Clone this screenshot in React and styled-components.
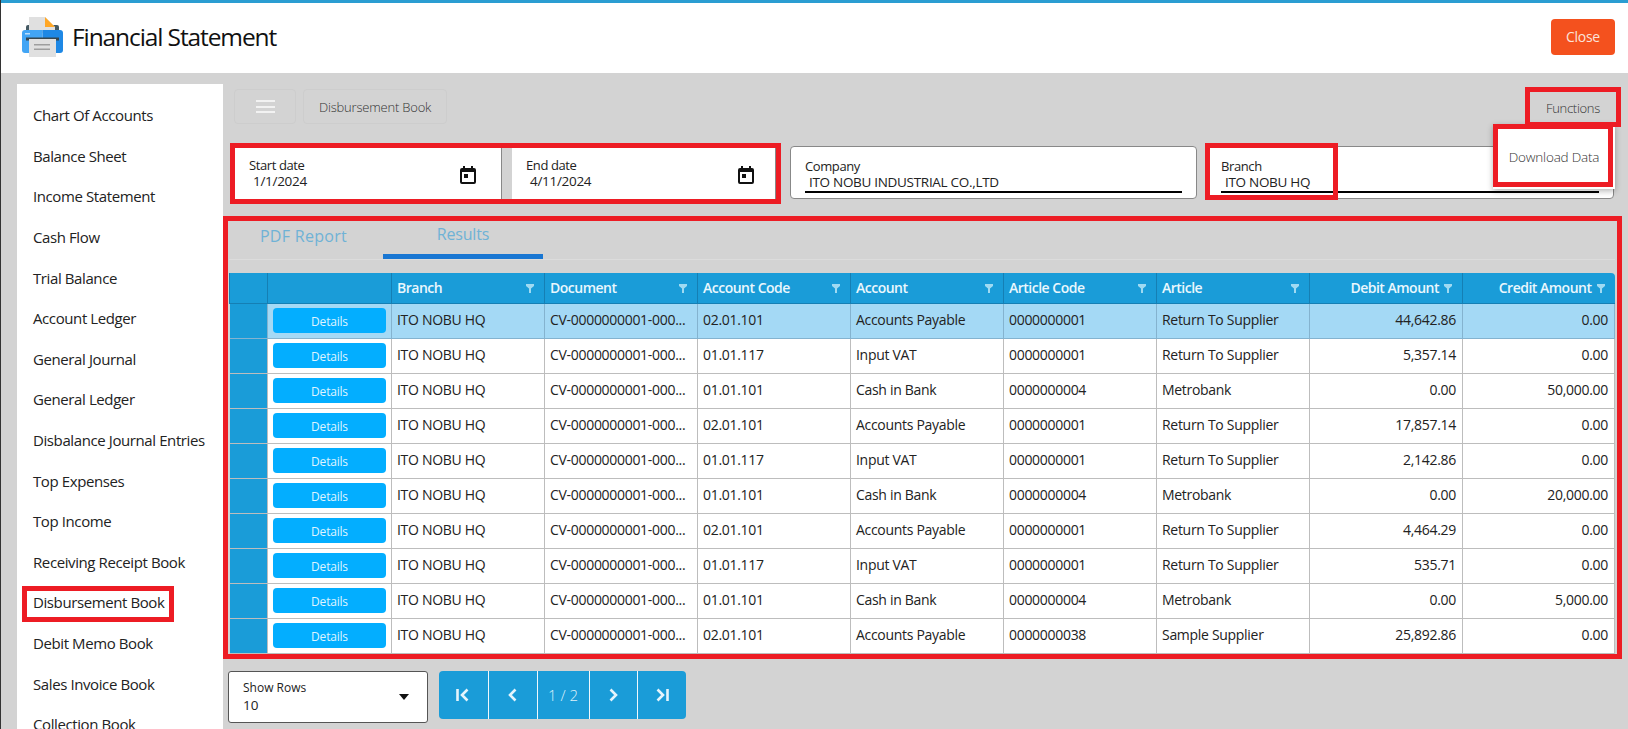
import React from 'react';
import styled, { createGlobalStyle } from 'styled-components';

const GlobalStyle = createGlobalStyle`
  html, body, #root {
    margin: 0;
    height: 100%;
  }

  body {
    overflow: hidden;
    font-family: "Open Sans", "Noto Sans", sans-serif;
    color: #222;
  }

  * {
    box-sizing: border-box;
  }
`;

const menuItems = [
  'Chart Of Accounts',
  'Balance Sheet',
  'Income Statement',
  'Cash Flow',
  'Trial Balance',
  'Account Ledger',
  'General Journal',
  'General Ledger',
  'Disbalance Journal Entries',
  'Top Expenses',
  'Top Income',
  'Receiving Receipt Book',
  'Disbursement Book',
  'Debit Memo Book',
  'Sales Invoice Book',
  'Collection Book',
];

const columns = [
  { title: '', width: 38 },
  { title: '', width: 124 },
  { title: 'Branch', width: 153 },
  { title: 'Document', width: 153 },
  { title: 'Account Code', width: 153 },
  { title: 'Account', width: 153 },
  { title: 'Article Code', width: 153 },
  { title: 'Article', width: 153 },
  { title: 'Debit Amount', width: 153, right: true },
  { title: 'Credit Amount', width: 152, right: true },
];

const payable = { account: 'Accounts Payable', code: '02.01.101' };
const vat = { account: 'Input VAT', code: '01.01.117' };
const cash = { account: 'Cash in Bank', code: '01.01.101' };
const supplier = { articleCode: '0000000001', article: 'Return To Supplier' };
const bank = { articleCode: '0000000004', article: 'Metrobank' };

const rows = [
  { ...payable, ...supplier, debit: '44,642.86', credit: '0.00' },
  { ...vat, ...supplier, debit: '5,357.14', credit: '0.00' },
  { ...cash, ...bank, debit: '0.00', credit: '50,000.00' },
  { ...payable, ...supplier, debit: '17,857.14', credit: '0.00' },
  { ...vat, ...supplier, debit: '2,142.86', credit: '0.00' },
  { ...cash, ...bank, debit: '0.00', credit: '20,000.00' },
  { ...payable, ...supplier, debit: '4,464.29', credit: '0.00' },
  { ...vat, ...supplier, debit: '535.71', credit: '0.00' },
  { ...cash, ...bank, debit: '0.00', credit: '5,000.00' },
  { ...payable, articleCode: '0000000038', article: 'Sample Supplier', debit: '25,892.86', credit: '0.00' },
];

const PrinterIcon = () => (
  <svg width="41" height="40" viewBox="0 0 41 40">
    <rect x="4" y="8" width="33" height="8" rx="2" fill="#455a64" />
    <path d="M7 0h16l10 10v6H7z" fill="#e0e0e0" />
    <path d="M23 0l10 10H23z" fill="#ffa726" />
    <path d="M3 13h17.500v23H3a3 3 0 0 1-3-3V16a3 3 0 0 1 3-3z" fill="#42a5f5" />
    <path d="M20.500 13H38a3 3 0 0 1 3 3v17a3 3 0 0 1-3 3H20.500z" fill="#1e88e5" />
    <rect x="3" y="16" width="5" height="1.500" fill="#bbdefb" />
    <rect x="4" y="20.500" width="33" height="3" fill="#37474f" />
    <rect x="7" y="22" width="27" height="18" fill="#e0e0e0" />
    <rect x="12" y="27" width="16" height="1.500" fill="#9e9e9e" />
    <rect x="12" y="31.500" width="16" height="1.500" fill="#9e9e9e" />
  </svg>
);

const CalendarIcon = () => (
  <svg width="16" height="18" viewBox="0 0 16 18" fill="#111">
    <path d="M3 0h2v2h6V0h2v2h1a2 2 0 0 1 2 2v12a2 2 0 0 1-2 2H2a2 2 0 0 1-2-2V4a2 2 0 0 1 2-2h1zM2 6v10h12V6z" />
    <rect x="4" y="8" width="4" height="4" />
  </svg>
);

const FilterIcon = () => (
  <FilterSvg width="8" height="9" viewBox="0 0 8 9">
    <path d="M0 0h8v2L5 4.500V9H3V4.500L0 2z" fill="#9fdaf2" />
  </FilterSvg>
);

const PagerIcon = ({ d }) => (
  <svg width="16" height="14" viewBox="0 0 16 14" fill="none" stroke="#e4f4fc" strokeWidth="2.600">
    <path d={d} />
  </svg>
);

const Caret = () => (
  <CaretSvg width="10" height="6" viewBox="0 0 10 6">
    <path d="M0 0h10L5 6z" fill="#111" />
  </CaretSvg>
);

const App = () => (
  <Page>
    <GlobalStyle />
    <TopBar>
      <Brand>
        <PrinterIcon />
        <Title>Financial Statement</Title>
      </Brand>
      <CloseButton>Close</CloseButton>
    </TopBar>
    <Body>
      <Sidebar>
        {menuItems.map((item) => (
          <MenuItem key={item}>
            <MenuLabel>
              {item}
              {item === 'Disbursement Book' && <RedMark $inset="-6px -10px -10px -11px" />}
            </MenuLabel>
          </MenuItem>
        ))}
      </Sidebar>
      <Main>
        <Toolbar>
          <MenuButton>
            <HamburgerLine />
            <HamburgerLine />
            <HamburgerLine />
          </MenuButton>
          <Crumb>Disbursement Book</Crumb>
          <Functions>
            Functions
            <RedMark $inset="0" />
            <FunctionsMenu>
              Download Data
              <RedMark $inset="0 2px 2px 0" />
            </FunctionsMenu>
          </Functions>
        </Toolbar>
        <Filters>
          <DateGroup>
            <FieldCard $width={267} $flat>
              <FieldLabel>Start date</FieldLabel>
              <FieldValue>1/1/2024</FieldValue>
              <CalendarSlot $right={25}><CalendarIcon /></CalendarSlot>
            </FieldCard>
            <FieldCard $width={264} $flat>
              <FieldLabel>End date</FieldLabel>
              <FieldValue>4/11/2024</FieldValue>
              <CalendarSlot $right={21}><CalendarIcon /></CalendarSlot>
            </FieldCard>
            <RedMark $inset="-3px -5px -5px -5px" />
          </DateGroup>
          <FieldCard $width={407}>
            <FieldLabel>Company</FieldLabel>
            <FieldValue>ITO NOBU INDUSTRIAL CO.,LTD</FieldValue>
            <Underline />
          </FieldCard>
          <FieldCard $width={408}>
            <FieldLabel>Branch</FieldLabel>
            <FieldValue>ITO NOBU HQ</FieldValue>
            <Underline />
            <RedMark $inset="-4px auto -2px -2px" $width="133px" />
          </FieldCard>
        </Filters>
        <Results>
          <RedMark $inset="0 -7px -5px -6px" />
          <Tabs>
            <Tab>PDF Report</Tab>
            <Tab $active>Results</Tab>
          </Tabs>
          <Grid>
            <colgroup>
              {columns.map((col, i) => (
                <col key={i} width={col.width} />
              ))}
            </colgroup>
            <thead>
              <tr>
                {columns.map((col, i) => (
                  <HeadCell key={i} $right={col.right}>
                    {col.title}
                    {col.title && <FilterIcon />}
                  </HeadCell>
                ))}
              </tr>
            </thead>
            <tbody>
              {rows.map((row, i) => (
                <Row key={i} $selected={i === 0}>
                  <Marker />
                  <Cell $tight><DetailsButton>Details</DetailsButton></Cell>
                  <Cell>ITO NOBU HQ</Cell>
                  <Cell>CV-0000000001-000...</Cell>
                  <Cell>{row.code}</Cell>
                  <Cell>{row.account}</Cell>
                  <Cell>{row.articleCode}</Cell>
                  <Cell>{row.article}</Cell>
                  <Cell $right>{row.debit}</Cell>
                  <Cell $right>{row.credit}</Cell>
                </Row>
              ))}
            </tbody>
          </Grid>
        </Results>
        <Footer>
          <RowsSelect>
            <RowsLabel>Show Rows</RowsLabel>
            <RowsValue>10</RowsValue>
            <Caret />
          </RowsSelect>
          <Pager>
            <PagerButton><PagerIcon d="M2.500 1v12M12.500 1.500L7 7l5.500 5.500" /></PagerButton>
            <PagerButton><PagerIcon d="M10.500 1.500L5 7l5.500 5.500" /></PagerButton>
            <PagerButton $width={52}>1 / 2</PagerButton>
            <PagerButton><PagerIcon d="M5.500 1.500L11 7l-5.500 5.500" /></PagerButton>
            <PagerButton><PagerIcon d="M3.500 1.500L9 7l-5.500 5.500M13.500 1v12" /></PagerButton>
          </Pager>
        </Footer>
      </Main>
    </Body>
  </Page>
);

export default App;

const Page = styled.div`
  display: flex;
  flex-direction: column;
  height: 729px;
  overflow: hidden;
  border-left: 1px solid #333;
  background-color: #d3d3d3;
`;

const TopBar = styled.header`
  display: flex;
  align-items: center;
  justify-content: space-between;
  flex-shrink: 0;
  height: 73px;
  padding: 0 13px 3px 21px;
  border-top: 3px solid #2a9dd2;
  background-color: #fff;
`;

const Brand = styled.div`
  display: flex;
  align-items: center;
  gap: 9px;
`;

const Title = styled.h1`
  margin: 0;
  font-size: 24.500px;
  font-weight: 400;
  letter-spacing: -1.100px;
  color: #111;
`;

const CloseButton = styled.button`
  width: 64px;
  height: 36px;
  border: none;
  border-radius: 4px;
  background-color: #f4511e;
  color: #fbe3da;
  font: inherit;
  font-size: 14px;
  letter-spacing: -0.3px;
`;

const Body = styled.div`
  display: flex;
  flex: 1;
  min-height: 0;
  padding: 11px 0 0 16px;
`;

const Sidebar = styled.nav`
  flex-shrink: 0;
  width: 206px;
  padding-top: 11px;
  overflow: hidden;
  background-color: #fff;
`;

const MenuItem = styled.div`
  display: flex;
  align-items: center;
  height: 40.600px;
  padding-left: 16px;
  font-size: 15px;
  letter-spacing: -0.4px;
  white-space: nowrap;
`;

const MenuLabel = styled.span`
  position: relative;
`;

const RedMark = styled.span`
  position: absolute;
  inset: ${(p) => p.$inset};
  width: ${(p) => p.$width || 'auto'};
  border: 5px solid #ed1c24;
  pointer-events: none;
  z-index: 5;
`;

const Main = styled.main`
  flex: 1;
  min-width: 0;
  padding: 5px 13px 0 6px;
`;

const Toolbar = styled.div`
  display: flex;
  gap: 7px;
  height: 35px;
  margin: 0 0 22px 5px;
`;

const MenuButton = styled.div`
  display: flex;
  flex-direction: column;
  align-items: center;
  justify-content: center;
  gap: 3.500px;
  width: 62px;
  border: 1px solid #cdcdcd;
  border-radius: 4px;
`;

const HamburgerLine = styled.span`
  width: 19px;
  height: 2px;
  background-color: #f2f2f2;
`;

const Crumb = styled.div`
  display: flex;
  align-items: center;
  padding: 0 15px;
  border: 1px solid #cdcdcd;
  border-radius: 4px;
  font-size: 13px;
  font-weight: 300;
  letter-spacing: -0.2px;
  color: #333;
`;

const Functions = styled.div`
  position: relative;
  display: flex;
  align-items: center;
  justify-content: center;
  width: 96px;
  height: 40px;
  margin: -2px -6px 0 auto;
  padding-top: 1px;
  font-size: 13px;
  font-weight: 300;
  letter-spacing: -0.3px;
  color: #333;
`;

const FunctionsMenu = styled.div`
  position: absolute;
  top: 37px;
  right: 6px;
  display: flex;
  align-items: center;
  justify-content: center;
  width: 122px;
  height: 65px;
  background-color: #fff;
  box-shadow: 0 2px 6px rgba(0, 0, 0, 0.3);
  font-size: 13.500px;
  letter-spacing: -0.2px;
  white-space: nowrap;
  z-index: 4;
`;

const Filters = styled.div`
  display: flex;
  gap: 9px;
  height: 53px;
  margin: 0 0 17px 6px;
`;

const DateGroup = styled.div`
  position: relative;
  display: flex;
  gap: 10px;
  margin-right: 5px;
`;

const FieldCard = styled.div`
  position: relative;
  width: ${(p) => p.$width}px;
  padding: 12px 14px 0;
  background-color: #fff;
  border: 1px solid #888;
  border-width: ${(p) => (p.$flat ? '0 1px 0 0' : '1px')};
  border-radius: ${(p) => (p.$flat ? '0' : '4px')};
`;

const FieldLabel = styled.div`
  font-size: 13px;
  line-height: 15px;
  letter-spacing: -0.4px;
`;

const FieldValue = styled.div`
  padding-left: 4px;
  font-size: 13.500px;
  line-height: 17px;
  letter-spacing: -0.3px;
`;

const CalendarSlot = styled.span`
  position: absolute;
  top: 20px;
  right: ${(p) => p.$right}px;
`;

const Underline = styled.div`
  position: absolute;
  left: 14px;
  right: 14px;
  bottom: 5px;
  height: 2px;
  background-color: #000;
`;

const Results = styled.section`
  position: relative;
`;

const Tabs = styled.div`
  display: flex;
  height: 44px;
  border-bottom: 1px solid #dcdcdc;
`;

const Tab = styled.div`
  display: flex;
  align-items: center;
  justify-content: center;
  width: 160px;
  height: 43px;
  padding-bottom: 3px;
  border-bottom: ${(p) => (p.$active ? '5px solid #1976d2' : 'none')};
  font-size: 16px;
  letter-spacing: -0.2px;
  color: #6fb2d6;
  &:first-child {
    width: 154px;
    padding-right: 5px;
    letter-spacing: 0.3px;
  }
`;

const Grid = styled.table`
  width: 1385px;
  margin-top: 13px;
  border-collapse: collapse;
  table-layout: fixed;
`;

const HeadCell = styled.th`
  position: relative;
  height: 30px;
  padding: 0 ${(p) => (p.$right ? '23px' : '5px')} 0 5px;
  border-left: 1px solid #157fb4;
  border-bottom: 1px solid #157fb4;
  background-color: #1a9cd8;
  color: #eaf7fd;
  font-size: 14px;
  font-weight: 600;
  letter-spacing: -0.5px;
  text-align: ${(p) => (p.$right ? 'right' : 'left')};
  white-space: nowrap;
  &:last-child {
    border-top-right-radius: 4px;
  }
`;

const FilterSvg = styled.svg`
  position: absolute;
  top: 11px;
  right: 10px;
`;

const Row = styled.tr`
  height: 35px;
  background-color: ${(p) => (p.$selected ? '#a4d9f5' : '#fff')};
  & > td {
    border-color: ${(p) => (p.$selected ? '#84b3cf' : '#bdbdbd')};
  }
`;

const Marker = styled.td`
  border: 1px solid #157fb4;
  border-width: 0 0 1px;
  background-color: #1a9cd8;
`;

const Cell = styled.td`
  padding: 0 ${(p) => (p.$tight ? '5px' : '6px')} 2px 5px;
  border: 1px solid #bdbdbd;
  border-width: 0 1px 1px 1px;
  font-size: 14px;
  letter-spacing: -0.3px;
  color: #222;
  text-align: ${(p) => (p.$right ? 'right' : 'left')};
  white-space: nowrap;
  overflow: hidden;
`;

const DetailsButton = styled.button`
  display: block;
  width: 113px;
  height: 25px;
  margin-top: 2px;
  padding-top: 3px;
  border: none;
  border-radius: 4px;
  background-color: #03aeff;
  color: #dff4ff;
  font: inherit;
  font-size: 12px;
  letter-spacing: -0.2px;
`;

const Footer = styled.div`
  display: flex;
  gap: 11px;
  margin: 17px 0 0 -1px;
`;

const RowsSelect = styled.div`
  position: relative;
  width: 200px;
  height: 52px;
  padding: 8px 14px 0;
  background-color: #fff;
  border: 1px solid #555;
  border-radius: 3px;
`;

const RowsLabel = styled.div`
  font-size: 12px;
  line-height: 16px;
`;

const RowsValue = styled.div`
  font-size: 13.500px;
  line-height: 18px;
`;

const CaretSvg = styled.svg`
  position: absolute;
  top: 22px;
  right: 18px;
`;

const Pager = styled.div`
  display: flex;
  height: 48px;
  border-radius: 4px;
  overflow: hidden;
  background-color: #1a9cd8;
`;

const PagerButton = styled.div`
  display: flex;
  align-items: center;
  justify-content: center;
  width: ${(p) => p.$width || 48.750}px;
  font-size: 15px;
  font-weight: 300;
  color: #dff1fa;
  & + & {
    border-left: 1px solid #eef8fd;
  }
`;
